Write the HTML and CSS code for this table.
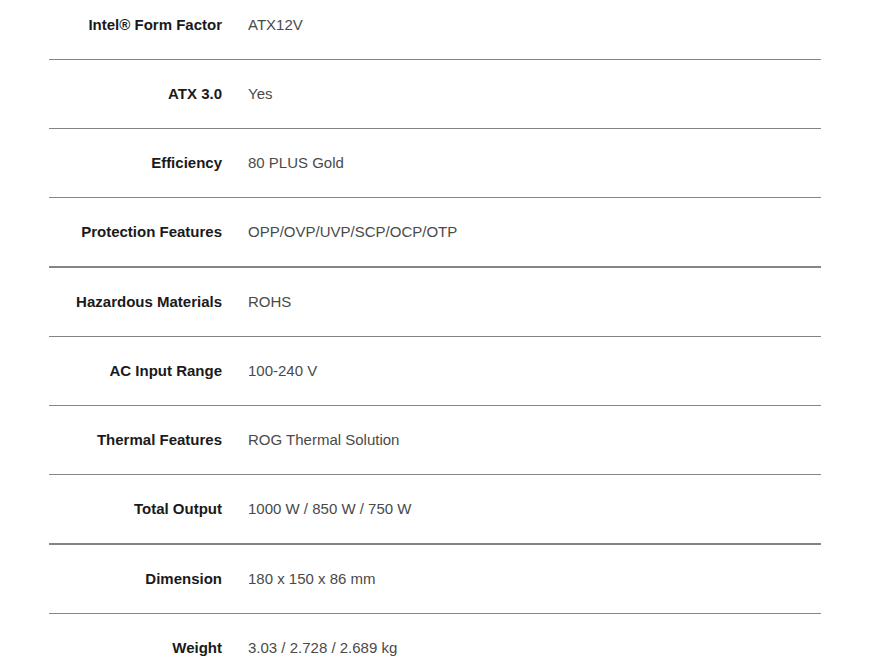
FILE: index.html
```html
<!DOCTYPE html>
<html>
<head>
<meta charset="utf-8">
<link rel="stylesheet" href="styles.css">
</head>
<body>
<div class="specs">
  <div class="row"><div class="label">Intel® Form Factor</div><div class="value">ATX12V</div></div>
  <div class="row"><div class="label">ATX 3.0</div><div class="value">Yes</div></div>
  <div class="row"><div class="label">Efficiency</div><div class="value">80 PLUS Gold</div></div>
  <div class="row thick"><div class="label">Protection Features</div><div class="value">OPP/OVP/UVP/SCP/OCP/OTP</div></div>
  <div class="row"><div class="label">Hazardous Materials</div><div class="value">ROHS</div></div>
  <div class="row"><div class="label">AC Input Range</div><div class="value">100-240 V</div></div>
  <div class="row"><div class="label">Thermal Features</div><div class="value">ROG Thermal Solution</div></div>
  <div class="row thick"><div class="label">Total Output</div><div class="value">1000 W / 850 W / 750 W</div></div>
  <div class="row"><div class="label">Dimension</div><div class="value">180 x 150 x 86 mm</div></div>
  <div class="row"><div class="label">Weight</div><div class="value">3.03 / 2.728 / 2.689 kg</div></div>
</div>
</body>
</html>
```
FILE: styles.css
```css
html, body {
  margin: 0;
  padding: 0;
  background: #fff;
}
body {
  font-family: "Liberation Sans", Arial, sans-serif;
  font-size: 15px;
  overflow: hidden;
}
.specs {
  margin: -9px 0 0 49px;
  width: 772px;
}
.row {
  display: flex;
  align-items: center;
  box-sizing: border-box;
  height: 69px;
  padding-bottom: 2px;
  border-bottom: 1px solid #858585;
}
.row.thick {
  height: 70px;
  border-bottom-width: 2px;
}
.label {
  width: 173px;
  flex: none;
  text-align: right;
  font-weight: bold;
  color: #1a1a1a;
  padding-right: 26px;
}
.value {
  color: #4a4a4a;
}
```
